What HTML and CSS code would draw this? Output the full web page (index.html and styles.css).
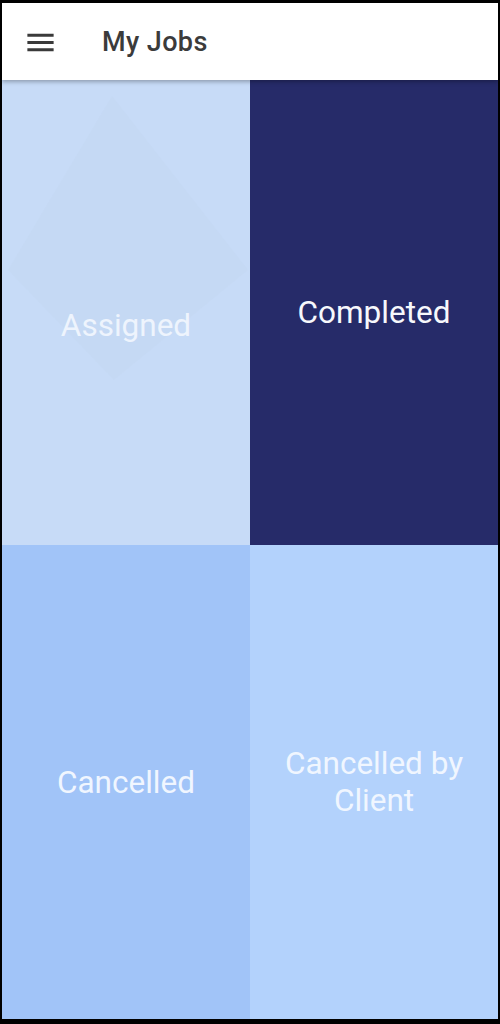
FILE: index.html
```html
<!DOCTYPE html>
<html lang="en">
<head>
<meta charset="utf-8">
<title>My Jobs</title>
<link rel="stylesheet" href="styles.css">
</head>
<body>
<div class="screen">
  <header class="appbar">
    <button class="menu-btn" aria-label="Menu">
      <svg viewBox="0 0 24 24" width="35" height="35"><path d="M3 18h18v-2H3v2zm0-5h18v-2H3v2zm0-7v2h18V6H3z" fill="#3a3a3a"/></svg>
    </button>
    <h1 class="title">My Jobs</h1>
  </header>
  <main class="grid">
    <div class="tile tile-assigned"><span class="label">Assigned</span></div>
    <div class="tile tile-completed"><span class="label">Completed</span></div>
    <div class="tile tile-cancelled"><span class="label">Cancelled</span></div>
    <div class="tile tile-client"><span class="label">Cancelled by<br>Client</span></div>
  </main>
</div>
</body>
</html>
```
FILE: styles.css
```css
html, body {
  margin: 0;
  padding: 0;
  background: #000;
}
body {
  padding: 3px 2px 5px 2px;
  font-family: Roboto, "Noto Sans", Arial, sans-serif;
}
.screen {
  width: 496px;
  height: 1016px;
  display: flex;
  flex-direction: column;
  background: #fff;
  overflow: hidden;
}
.appbar {
  height: 77px;
  flex: none;
  background: #fff;
  display: flex;
  align-items: center;
  position: relative;
  z-index: 2;
  box-shadow: 0 2px 4px rgba(0, 0, 0, 0.28);
}
.menu-btn {
  border: 0;
  background: none;
  padding: 0;
  margin: 1px 0 0 21px;
  width: 35px;
  height: 35px;
  display: flex;
  align-items: center;
  justify-content: center;
}
.title {
  margin: 0 0 0 44px;
  font-size: 27px;
  font-weight: 500;
  color: #3b3b3b;
  letter-spacing: 0.4px;
}
.grid {
  flex: 1;
  display: grid;
  grid-template-columns: 248px 248px;
  grid-template-rows: 465px 474px;
}
.tile {
  display: flex;
  align-items: center;
  justify-content: center;
  text-align: center;
  position: relative;
  overflow: hidden;
}
.label {
  font-size: 31.5px;
  line-height: 37px;
  color: #fff;
  position: relative;
}
.tile-assigned {
  background: #c7dbf7;
  padding-top: 26px;
  box-sizing: border-box;
}
.tile-assigned::before {
  content: "";
  position: absolute;
  inset: 0;
  background: #c4d6ef;
  opacity: 0.4;
  clip-path: polygon(110px 16px, 246px 190px, 112px 300px, 6px 190px);
}
.tile-assigned .label {
  color: #eef4fd;
}
.tile-completed {
  background: #262b69;
}
.tile-completed .label {
  color: #f7f8fc;
}
.tile-cancelled {
  background: #a1c4f8;
}
.tile-cancelled .label {
  color: #f0f6ff;
}
.tile-client {
  background: #b3d2fc;
}
.tile-client .label {
  color: #f0f6ff;
}
```
